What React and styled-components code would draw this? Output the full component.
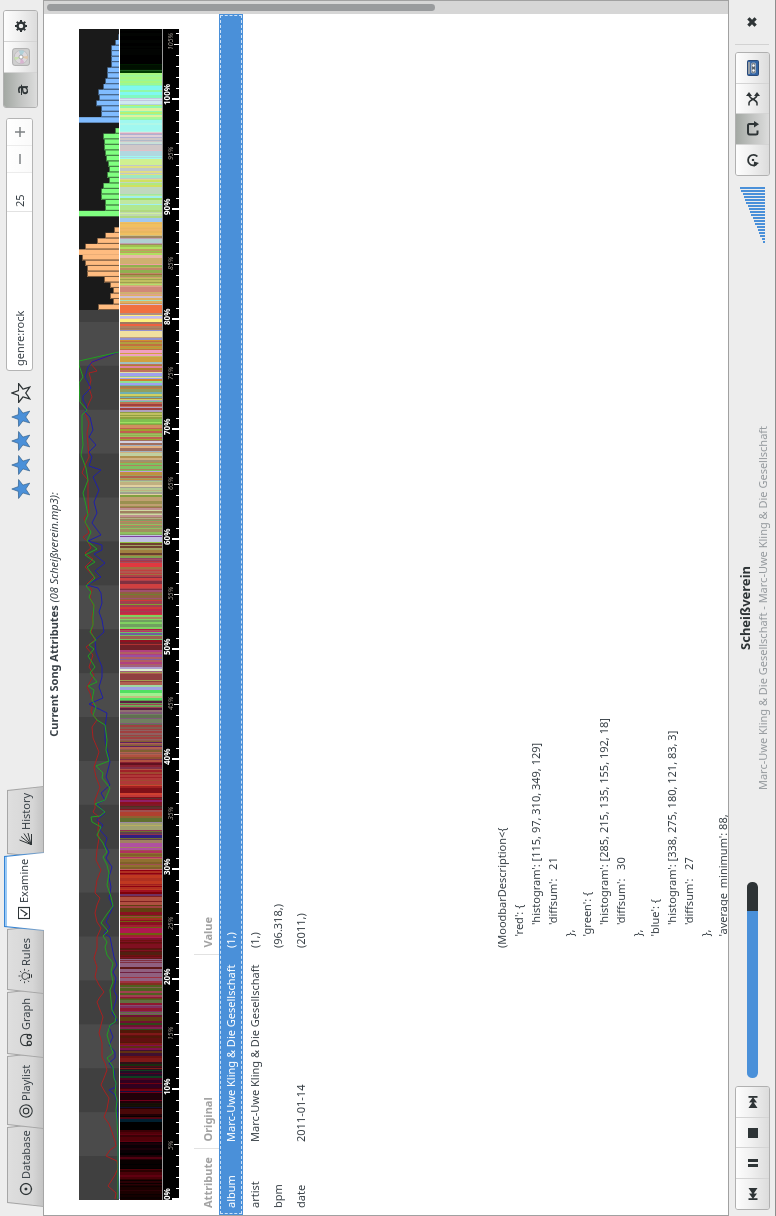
import React from 'react';
import styled, { createGlobalStyle, css } from 'styled-components';

const GlobalStyle = createGlobalStyle`
  *, *::before, *::after { box-sizing: border-box; }
  html, body { margin: 0; height: 100%; overflow: hidden; background: #ededed; }
  button, input { font: inherit; color: inherit; margin: 0; }
`;

const Stage = styled.div`
  position: fixed;
  top: 0;
  left: 0;
  width: 100vh;
  height: 100vw;
  transform-origin: 0 0;
  transform: rotate(-90deg) translateX(-100vh);
  display: flex;
  flex-direction: column;
  overflow: hidden;
  background: #ededed;
  color: #3a4248;
  font: 11px/16px "Noto Sans", "Open Sans", sans-serif;
  border-bottom: 1px solid #8e8e8e;
`;

const TopBar = styled.header`
  display: flex;
  justify-content: space-between;
  height: 44px;
  flex: none;
  border-bottom: 1px solid #a1a1a1;
`;

const Tabs = styled.nav`
  display: flex;
  align-items: flex-end;
  padding-left: 9px;
  margin-bottom: -1px;
`;

const Tab = styled.button`
  position: relative;
  width: ${(p) => p.$width}px;
  height: ${(p) => (p.$active ? 40 : 37)}px;
  padding: 0 0 0 10px;
  margin-right: -6px;
  border: 0;
  background: none;
  display: flex;
  align-items: center;
  gap: 2px;
  z-index: ${(p) => (p.$active ? 2 : 0)};
  isolation: isolate;

  &::before, &::after {
    content: '';
    position: absolute;
    inset: 0;
    z-index: -1;
    clip-path: polygon(4px 0, calc(100% - 4px) 0, 100% 100%, 0 100%);
    background: ${(p) => (p.$active ? 'linear-gradient(#3584d4 30%, #8fa9c4)' : '#a6a6a6')};
  }
  &::after {
    inset: ${(p) => (p.$active ? '1px 1px 0' : '1px')};
    background: ${(p) => (p.$active ? 'linear-gradient(#9ccaf5 2px, #fff 2px)' : 'linear-gradient(#dedede, #d6d6d6 70%, #c4c4c4)')};
  }
  svg { flex: none; }
`;

const Tools = styled.div`
  display: flex;
  align-items: center;
  padding: 0 10px 2px 0;
`;

const Stars = styled.div`
  display: flex;
  gap: 4px;
  margin-right: 12px;
`;

const Query = styled.form`
  display: flex;
  width: 253px;
  height: 27px;
  margin: 0 10px 2px 0;
  border: 1px solid #b4b4b4;
  border-radius: 3px;
  background: #fff;
  overflow: hidden;
`;

const QueryInput = styled.input`
  width: 158px;
  border: 0;
  padding: 0 4px;
  background: none;
  outline: 0;
`;

const CountInput = styled.input`
  width: 39px;
  border: 0;
  border-left: 1px solid #e2e2e2;
  padding: 0 4px;
  background: none;
  outline: 0;
`;

const Step = styled.button`
  flex: 1;
  padding: 0;
  border: 0;
  border-left: 1px solid #ececec;
  background: linear-gradient(#fff, #fafafa);
  display: grid;
  place-items: center;
`;

const Group = styled.div`
  display: flex;
  flex: none;
  width: ${(p) => p.$width || 124}px;
  height: 35px;
  border: 1px solid #b0b0b0;
  border-radius: 3px;
  overflow: hidden;
`;

const ToolButton = styled.button`
  flex: ${(p) => p.$grow || 1} 1 0;
  min-width: 0;
  padding: 0;
  border: 0;
  display: grid;
  place-items: center;
  background: linear-gradient(#fdfdfd, #f2f2f2 40%, #dcdcdc);
  & + & { border-left: 1px solid #d4d4d4; }
  ${(p) => p.$active && css`background: linear-gradient(#a3a8a3, #c2c4c2 50%, #dcdcdc);`}
`;

const Struck = styled.span`
  font-size: 18px;
  font-weight: 500;
  line-height: 18px;
  color: #2e3436;
  text-decoration: line-through;
`;

const Content = styled.div`
  display: flex;
  flex: 1;
  min-height: 0;
  background: #fff;
  border-left: 1px solid #a1a1a1;
`;

const Pane = styled.main`
  flex: 1;
  min-width: 0;
  overflow: hidden;
`;

const ScrollTrack = styled.div`
  width: 14px;
  flex: none;
  padding: 3px 3px 0;
  background: #d6d6d6;
  border-right: 1px solid #a1a1a1;
`;

const ScrollThumb = styled.div`
  width: 7px;
  height: 57%;
  border-radius: 4px;
  background: #999b9d;
`;

const Heading = styled.h1`
  margin: 2px 0 0;
  height: 33px;
  font: bold 11px/16px "Noto Sans", sans-serif;
  text-align: center;
  em { font-weight: 400; }
`;

const Charts = styled.div`
  padding: 0 15px;
`;

const Plot = styled.svg`
  display: block;
  width: 100%;
  height: auto;
`;

const Attributes = styled.table`
  width: 100%;
  margin-top: 15px;
  border-collapse: collapse;
  table-layout: fixed;

  th {
    height: 25px;
    padding: 2px 0 0 7px;
    text-align: left;
    color: #a3a3a3;
    vertical-align: middle;
  }
  th + th {
    border-left: 1px solid #e2e2e2;
  }
  td {
    height: 23px;
    padding: 0 0 0 7px;
    vertical-align: middle;
    white-space: pre;
  }
`;

const Row = styled.tr`
  ${(p) => p.$selected && css`
    background: #4a90d9;
    color: #fff;
    outline: 1px dashed #cfe2f6;
    outline-offset: -2px;
    td { height: 24px; }
  `}
`;

const Description = styled.pre`
  margin: 181px 0 0;
  font: 11px/17px "Noto Sans", sans-serif;
`;

const PlayerBar = styled.footer`
  display: flex;
  align-items: flex-start;
  flex: none;
  height: 47px;
  padding: 6px 0 0 6px;
  border-top: 1px solid #a1a1a1;
`;

const Seek = styled.input`
  appearance: none;
  flex: none;
  width: 196px;
  height: 11px;
  margin: 12px 0 0 8px;
  border-radius: 5px;
  background: linear-gradient(to right, #4a90d9 85%, #2e3436 85%);
  &::-webkit-slider-thumb { appearance: none; width: 0; height: 0; }
`;

const NowPlaying = styled.div`
  flex: 1;
  min-width: 0;
  padding-right: 91px;
  text-align: center;
  white-space: nowrap;
`;

const SongTitle = styled.h2`
  margin: 0;
  font-size: 13px;
  line-height: 20px;
  color: #2e3436;
`;

const SongDetail = styled.p`
  margin: 0;
  line-height: 16px;
  color: #969b9f;
`;

const VolumeMeter = styled.svg`
  flex: none;
  margin: 4px 11px 0 0;
`;

const CloseButton = styled.button`
  width: 45px;
  height: 34px;
  margin-left: 7px;
  padding: 0;
  border: 0;
  border-left: 1px solid #d2d2d2;
  background: none;
  display: grid;
  place-items: center;
`;

const INK = '#2e3436';

function Icon({ size = 16, children }) {
  return (
    <svg width={size} height={size} viewBox="0 0 16 16" fill="none" stroke={INK} strokeWidth="1.3" aria-hidden="true">
      {children}
    </svg>
  );
}

const icons = {
  database: <Icon><circle cx="8" cy="8" r="5.5" /><circle cx="8" cy="8" r="1.4" fill={INK} stroke="none" /></Icon>,
  playlist: <Icon><circle cx="8" cy="8" r="6.2" strokeWidth="1.1" /><circle cx="8" cy="8" r="2.8" strokeWidth="1.1" /></Icon>,
  graph: (
    <Icon>
      <path d="M3.6 12.5C1 8 2 2.5 8 2.5s7 5.500 4.400 10" strokeWidth="1.1" />
      <circle cx="4.600" cy="11.300" r="2.200" strokeWidth="1.1" />
      <circle cx="11.400" cy="11.300" r="2.200" strokeWidth="1.1" />
    </Icon>
  ),
  rules: (
    <Icon>
      <path d="M6 11.500V9.500C3.500 7.500 4.500 4 8 4s4.500 3.500 2 5.500v2zM6.300 13.500h3.400" strokeWidth="1" />
      <path d="M8 .5v1.800M3 2l1.300 1.300M13 2l-1.300 1.300M.8 6.500h1.800M15.200 6.500h-1.800M2 11l1.400-1M14 11l-1.400-1" strokeWidth="0.900" />
    </Icon>
  ),
  examine: <Icon><path d="M2.500 2.500h11v11h-11z" strokeWidth="1.200" /><path d="M5 8.200l2.200 2.800L11.500 4.500" /></Icon>,
  history: <Icon><path d="M3.500 13L8 1.500M3.500 13L11.500 3M3.500 13L14.500 6M3.500 13L15 10M3 13.500h11" strokeWidth="1" /></Icon>,
  gear: (
    <Icon>
      <circle cx="8" cy="8" r="3.400" strokeWidth="2.400" />
      <path d="M8 2v2M8 12v2M2 8h2M12 8h2M3.800 3.800l1.300 1.300M10.900 10.900l1.300 1.300M12.200 3.800l-1.300 1.300M5.100 10.900l-1.300 1.300" strokeWidth="2" />
    </Icon>
  ),
  refresh: (
    <Icon>
      <path d="M3.800 11.800A5.300 5.300 0 1 1 11.500 12.300" strokeWidth="1.700" />
      <path d="M1 8.800l5.500.2-1.500 5z" fill={INK} stroke="none" />
      <circle cx="8" cy="8" r="1.200" fill={INK} stroke="none" />
    </Icon>
  ),
  repeat: (
    <Icon>
      <path d="M6.500 12.500H3.800Q2.500 12.500 2.500 11V4.800Q2.500 3 4.300 3h7.400Q13 3 13 4.800V10" strokeWidth="2" />
      <path d="M9.500 9h6.500l-3.200 5z" fill={INK} stroke="none" />
    </Icon>
  ),
  shuffle: (
    <Icon>
      <path d="M1.500 4h2.500C7.500 4 8 12 12 12M1.500 12h2.500C7.500 12 8 4 12 4" strokeWidth="1.700" />
      <path d="M11 1l4 3-4 3zM11 9l4 3-4 3z" fill={INK} stroke="none" />
    </Icon>
  ),
  close: <Icon><path d="M4.300 4.300l7.400 7.400M11.700 4.300l-7.400 7.400" strokeWidth="3.200" /></Icon>,
  previous: <Icon><path d="M2 3.500h1.800v4L8.500 4v3.300L14 3.500v9L8.500 8.700V12L3.800 8.500v4H2z" fill={INK} stroke="none" /></Icon>,
  next: <Icon><path d="M14 3.500h-1.800v4L7.500 4v3.300L2 3.500v9l5.500-3.800V12l4.700-3.500v4H14z" fill={INK} stroke="none" /></Icon>,
  pause: <Icon><path d="M4 3h3v10H4zM9 3h3v10H9z" fill={INK} stroke="none" /></Icon>,
  stop: <Icon><path d="M3 3h10v10H3z" fill={INK} stroke="none" /></Icon>,
  plus: <Icon><path d="M8 3v10M3 8h10" stroke="#7d8183" strokeWidth="1.500" /></Icon>,
  minus: <Icon><path d="M3 8h10" stroke="#7d8183" strokeWidth="1.500" /></Icon>,
  disc: (
    <Icon size={18}>
      <rect x="0.500" y="0.500" width="15" height="15" rx="2" fill="#cfcfcf" stroke="#a8a8a8" strokeWidth="0.800" />
      <circle cx="8" cy="8" r="6" fill="#dcd8dc" stroke="#b4b4b4" strokeWidth="0.600" />
      <path d="M8 8L5 3A6 6 0 0 1 8 2z" fill="#c8e0b0" stroke="none" />
      <path d="M8 8L13.500 6A6 6 0 0 1 13.200 11z" fill="#b0d0d8" stroke="none" />
      <path d="M8 8L3 11A6 6 0 0 1 2.100 7z" fill="#d8b4d0" stroke="none" />
      <path d="M8 8L9 14A6 6 0 0 1 6 13.600z" fill="#e0c8a8" stroke="none" />
      <circle cx="8" cy="8" r="1.800" fill="#fff" stroke="#999" strokeWidth="0.700" />
    </Icon>
  ),
  cassette: (
    <Icon>
      <rect x="0.500" y="2.500" width="15" height="11" rx="1" fill="#3465a4" stroke="#2b4a78" strokeWidth="1" />
      <rect x="2" y="3" width="12" height="2.200" fill="#98a0a8" stroke="none" />
      <rect x="3" y="6.500" width="10" height="4" rx="1" fill="#5a6470" stroke="#c8ccd0" strokeWidth="0.700" />
      <circle cx="5.500" cy="8.500" r="1.200" fill="#fff" stroke="none" />
      <circle cx="10.500" cy="8.500" r="1.200" fill="#fff" stroke="none" />
    </Icon>
  ),
};

function Star({ filled }) {
  return (
    <svg width="20" height="20" viewBox="0.5 0.2 19 19" aria-hidden="true">
      <path
        d="M10 1l2.300 6.200 6.700.2-5.300 4.100 1.900 6.500L10 14.200 4.400 18l1.900-6.500L1 7.400l6.700-.2z"
        fill={filled ? '#4a90d9' : 'none'}
        stroke={filled ? '#3b6690' : INK}
        strokeWidth={filled ? 0.7 : 1.2}
      />
    </svg>
  );
}

/* Mood strip, from the end of the song to its start: [top, bottom, colours]. */
const SPAN = 1200;
const mood = [
  [29, 64, '000000 000000 020402'], [64, 70, '001800 001000 001c00'], [70, 73, '003c00 206020 80e080'],
  [73, 85, 'a8f880 a0f890 98f898'], [85, 98, '80f8f0 80f8c0 90f8a8'], [98, 105, 'b0d0e0 c0c8e0 d0e8f0'],
  [105, 120, 'a8f898 b8f070 90f8b0 e0f0a0'], [120, 132, 'a0f8f0 b0f8e8'], [132, 138, 'd0a8c0 b0b0d0 e0d0d8'],
  [138, 150, 'd0c8c8 c8e0d8 b0b8c8'], [150, 165, 'd0f090 a0f8f0 b0d8e0 e0c0c8 90f0a0'],
  [165, 180, 'c0c8c8 e0e080 a0e8c0 e0d890'], [180, 195, 'b0e880 d0e060 c0d8c0 a0e8a0'],
  [195, 205, 'a0f0f0 a0e070 c0e8a0'], [205, 218, 'b0e890 c0d8b0 d0f0a0 b0d880'], [218, 222, 'a0c8f0'],
  [222, 235, 'f0c060 e8b860 f0b868'], [235, 245, 'c0a0b0 d0c080 a08860 b0d0d0'], [245, 255, 'b0e060 a0c050 c0c0c0 c0a060'],
  [255, 265, 'e8b8a8 f0a0a0 d0b070'], [265, 275, 'a07040 c0b060 90b050 c08868'], [275, 285, 'c0c060 b0e070 a0a050 d0a070'],
  [285, 295, 'e0a090 d0b070 d08878'], [295, 305, 'e0b060 a0e0c0 d0c0d0 d09850'], [305, 315, 'f07040 90c080 e08040 b09080'],
  [315, 322, 'c0c0f0 fff080 e0c0c0'], [322, 330, 'b08060 f06040 a07860'], [330, 340, 'c0a080 9090d0 f0e0a0 d0d080'],
  [340, 350, 'd09030 b0a040 c07040'], [350, 362, 'f0a0c0 d0e0e0 d0a040 c0c060'], [362, 372, 'c07060 b08030 906040 a0c0c0 e080a0'],
  [372, 385, 'd08030 90c0a0 a0a0f0 90e090 e0e0a0'], [385, 400, 'a08050 90a060 d0d060 70b0b0 c08040'],
  [400, 412, 'b0a0c0 70c0a0 a04040 80b060 c07050'], [412, 425, 'a0e060 80c050 90a040 c0c060'],
  [425, 440, '90b050 c06050 a0c060 a0a030 d09060'], [440, 452, 'a07060 a0b0c0 e0b080 d0d0e0'],
  [452, 463, 'b09050 c0d0a0 a09070 d0b080'], [463, 472, 'b08060 80c060 c0a0e0 a0e080'], [472, 480, 'b06050 c09040 a0a060'],
  [480, 495, 'c0b080 d09080 b0c890 a0a090 e0d0a0'], [495, 508, 'c0a070 a07050 80a040 9a9050'],
  [508, 520, 'd0d8a0 a08060 c09090 b0b080'], [520, 535, '80a060 a09060 b05050 c08060 90c060'],
  [535, 542, '8040a0 a080e0 80e0c0 c0c0e0'], [542, 550, '90c040 704030 a0a060'], [550, 558, 'a08040 80a050 c07060 6a4030'],
  [558, 563, 'b03840 904060 a05060'], [563, 575, 'e03840 c04040 b05850 a07040'], [575, 590, 'c04060 d04040 803040 b04048'],
  [590, 600, '708030 906040 a05070'], [600, 615, 'c0284a d03838 80a030 a04050'], [615, 630, 'b07050 b08060 70a060 b01848 80d060'],
  [630, 640, '7060a0 a06050 70c060 c03070'], [640, 650, '702028 901020 b03030 803050'], [650, 665, 'b04080 8060a0 9850a0 b06060'],
  [665, 672, '90e080 b0a0d0 e0f0d0 a06080'], [672, 685, 'c05048 b06050 904040 a0a050'], [685, 690, 'a0d8a0 a0a0e0'],
  [690, 700, '50e060 a0f090 c0c080 c060a0'], [700, 710, '60a050 80a060 a04050 5a2040'], [710, 725, '708060 907070 805878 607050'],
  [725, 740, '906060 a04040 806050 a02040'], [740, 755, 'a04040 b06050 806030 905850 602060'],
  [755, 770, '803048 b05040 601020 905030 8a2030'], [770, 785, 'a02028 b03838 a04830'], [785, 798, 'c03838 a02020 d04030 801018'],
  [798, 810, '801828 603030 8a1020 503020 902068'], [810, 822, 'b04030 a05050 906030 607030'],
  [822, 830, '9a8aa0 b8b060 a0a070 90d060'], [830, 840, '903050 604050 707030 302080'], [840, 850, 'b06050 b050a0 8aa040 a08060'],
  [850, 870, 'a05050 907030 b03060 80602a c06060'], [870, 890, 'b03020 a02020 c03820 900010'],
  [890, 905, '802020 a01020 703060 b05040 800008'], [905, 925, '706010 a03020 a04040 8a1020 604010'],
  [925, 940, '801030 a02030 706010 b01850'], [940, 958, '701010 601010 502010 801020'], [958, 970, '906080 803040 601818'],
  [970, 985, '702040 a03040 906080 803020'], [985, 1000, '704020 806050 901838 a04050 506020'],
  [1000, 1015, '805070 607040 704020 901830 803060'], [1015, 1030, '304818 603818 701030 802050 604010'],
  [1030, 1045, '601010 801818 501808'], [1045, 1058, '701010 401030 603010 801050'], [1058, 1070, '301018 500818 1a3010 801818'],
  [1070, 1080, '301030 201028 500020 104020'], [1080, 1092, '400008 300020 700010 101040'],
  [1092, 1103, '200008 500010 0a0008 700018'], [1103, 1108, '101005 1a1005 101030'], [1108, 1118, '200005 4a0808 0a0000'],
  [1118, 1122, '400015 500018 002030'], [1122, 1130, '000000'], [1130, 1142, '500008 3a0005 600010'],
  [1142, 1156, '000000 0a0005 1a0008'], [1156, 1160, '200005 500010'], [1160, 1169, '000000 080000'],
  [1169, 1180, '4a0008 2a0000 600010'], [1180, 1195, '1a0000 0a0000 2a0005'], [1195, 1200, '0a0000 140000'],
];

function moodStripes() {
  let seed = 7;
  const next = () => {
    seed = (seed * 1103515245 + 12345) % 2147483648;
    return seed / 2147483648;
  };
  const out = [];
  mood.forEach(([top, bottom, palette]) => {
    const colours = palette.split(' ');
    let y = top;
    while (y < bottom) {
      const w = Math.min(bottom - y, next() < 0.65 ? 1 : 2);
      out.push({ x: SPAN - y - w, w, fill: `#${colours[Math.floor(next() * colours.length)]}` });
      y += w;
    }
  });
  return out;
}

/* Loudness curves as [distance from the end, depth below the top edge] pairs. */
const curves = {
  '#a82020': [
    [1199, 36], [1193, 37], [1186, 29], [1175, 36], [1168, 39], [1161, 38], [1156, 27], [1150, 31], [1146, 37], [1141, 36], [1132, 33], [1124, 30], [1117, 25], [1109, 28], [1098, 30], [1092, 26], [1085, 22], [1078, 25], [1070, 28], [1063, 26], [1057, 23], [1043, 23], [1033, 20], [1025, 22], [1017, 24], [1010, 21], [1002, 18], [997, 21], [992, 25], [985, 20], [977, 16], [967, 18], [958, 15], [948, 18], [937, 18], [928, 22], [922, 18], [913, 16], [905, 18], [898, 21], [893, 16], [880, 18], [870, 22], [860, 17], [850, 18], [838, 20], [830, 19], [817, 20], [812, 14], [808, 16], [800, 16], [787, 21], [777, 17], [767, 15], [752, 20], [738, 14], [727, 13], [720, 18], [712, 12], [703, 14], [693, 11], [687, 8], [675, 15], [667, 10], [655, 14], [647, 7], [640, 16], [632, 12], [625, 14], [617, 13], [607, 15], [597, 11], [590, 13], [584, 8], [577, 15], [567, 6], [559, 14], [553, 6], [548, 12], [542, 9], [537, 4], [533, 10], [518, 5], [512, 10], [500, 9], [480, 9], [473, 3], [463, 7], [457, 10], [445, 9], [433, 8], [423, 10], [413, 6], [403, 10], [397, 13], [388, 10], [380, 12], [373, 10], [371, 18], [363, 11], [352, 40],
  ],
  '#1f1fa8': [
    [1199, 40], [1145, 39], [1103, 38], [1095, 36], [1090, 30], [1087, 37], [1070, 35], [1063, 30], [1058, 36], [1052, 36], [1045, 30], [1037, 34], [1027, 30], [1020, 38], [1013, 33], [997, 38], [990, 35], [978, 37], [972, 34], [965, 38], [957, 35], [947, 33], [937, 31], [933, 25], [927, 31], [922, 27], [907, 34], [898, 30], [887, 32], [877, 30], [867, 33], [858, 27], [852, 30], [845, 26], [838, 28], [830, 21], [825, 24], [820, 18], [813, 26], [804, 18], [800, 26], [793, 22], [785, 31], [777, 27], [762, 31], [740, 26], [727, 26], [713, 28], [704, 10], [698, 24], [687, 20], [677, 23], [667, 23], [652, 17], [640, 16], [632, 25], [620, 23], [612, 20], [603, 23], [593, 22], [588, 19], [585, 8], [577, 22], [571, 16], [563, 26], [554, 15], [550, 23], [545, 23], [541, 9], [535, 22], [523, 13], [513, 18], [502, 15], [490, 20], [477, 14], [470, 22], [466, 10], [457, 13], [452, 10], [445, 17], [437, 10], [430, 14], [417, 11], [412, 6], [407, 8], [400, 4], [396, 4], [388, 12], [377, 6], [367, 9], [362, 13], [352, 40],
  ],
  '#20a020': [
    [1199, 39], [1143, 39], [1120, 38], [1110, 37], [1100, 38], [1093, 36], [1083, 37], [1078, 35], [1067, 34], [1058, 28], [1053, 34], [1045, 31], [1035, 28], [1025, 31], [1022, 36], [1017, 37], [1010, 33], [1000, 32], [990, 31], [982, 34], [972, 32], [963, 34], [955, 28], [947, 26], [942, 28], [936, 24], [931, 29], [923, 22], [914, 28], [906, 34], [897, 32], [885, 28], [873, 30], [865, 28], [857, 24], [852, 28], [843, 24], [835, 18], [827, 22], [822, 13], [817, 12], [816, 21], [812, 26], [804, 16], [800, 26], [788, 31], [778, 23], [773, 24], [766, 17], [761, 30], [750, 27], [740, 28], [725, 26], [720, 18], [715, 14], [707, 17], [700, 13], [690, 15], [686, 9], [682, 18], [673, 11], [667, 16], [656, 9], [649, 15], [645, 10], [640, 17], [632, 11], [625, 14], [617, 14], [605, 15], [597, 10], [592, 12], [586, 7], [578, 16], [567, 8], [562, 16], [555, 6], [549, 18], [541, 8], [532, 12], [522, 6], [515, 9], [505, 7], [493, 4], [480, 9], [468, 7], [455, 2], [445, 4], [430, 3], [415, 3], [410, 8], [402, 1], [383, 0], [377, 4], [365, 0], [361, 0], [352, 40],
  ],
};

const bars = [
  { fill: '#ffbc80', values: [21, 6, 9, 6, 9, 15, 32, 32, 34, 37, 40, 34, 22, 14, 5, 0, 0] },
  { fill: '#80ff80', values: [40, 14, 14, 18, 18, 16, 10, 12, 10, 11, 13, 14, 15, 15, 16, 4, 0] },
  { fill: '#80bcff', values: [40, 18, 18, 23, 20, 21, 16, 14, 12, 12, 8, 8, 8, 8, 4, 1, 0] },
].flatMap(({ fill, values }) => values.map((value) => ({ fill, value })));

function MoodPlot() {
  const step = 281 / bars.length;
  return (
    <Plot viewBox="0 0 1171 100" role="img" aria-label="Moodbar of the current song">
      <rect width="1171" height="40" fill="#404040" />
      {Array.from({ length: 10 }, (_, i) => (
        <rect key={i} x={44 + i * 87.8} width="43.9" height="40" fill="#4b4b4b" />
      ))}
      <rect x="890" width="281" height="40" fill="#1a1a1a" />
      {Object.entries(curves).map(([stroke, points]) => (
        <polyline
          key={stroke}
          points={points.map(([d, h]) => `${SPAN - d},${h}`).join(' ')}
          fill="none"
          stroke={stroke}
          strokeWidth="1"
        />
      ))}
      {bars.map(({ fill, value }, i) => value > 0 && (
        <g key={i}>
          <rect x={890 + i * step} y={40 - value} width={step} height={value} fill={fill} />
          {value < 40 && (
            <path d={`M${890.5 + i * step} 40V${40.5 - value}h${step - 0.5}`} stroke="#000" strokeOpacity="0.5" fill="none" />
          )}
        </g>
      ))}
      <g shapeRendering="crispEdges">
        {moodStripes().map(({ x, w, fill }) => (
          <rect key={x} x={x} y="41" width={w} height="42" fill={fill} />
        ))}
        <rect y="83" width="1171" height="1" fill="#999" />
        <rect y="84" width="1171" height="16" fill="#000" />
        {Array.from({ length: 107 }, (_, i) => {
          const kind = i % 10 === 0 ? 2 : i % 5 === 0 ? 1 : 0;
          const len = [3, 5, 7][kind];
          return <rect key={i} x={i * 11} y={100 - len} width={kind === 2 ? 2 : 1} height={len} fill="#fff" />;
        })}
      </g>
      {Array.from({ length: 22 }, (_, i) => {
        const major = i % 2 === 0;
        return (
          <text
            key={i}
            x={Math.max(0, i * 55 - 5)}
            y={major ? 91 : 94}
            fill={major ? '#fff' : '#a39c94'}
            fontFamily="Noto Sans, sans-serif"
            fontSize={major ? 8 : 7}
            fontWeight={major ? 700 : 400}
            fontStyle={major ? 'normal' : 'italic'}
          >
            {i * 5}%
          </text>
        );
      })}
    </Plot>
  );
}

function Volume() {
  return (
    <VolumeMeter width="56" height="26" viewBox="0 0 56 26" role="img" aria-label="Volume" shapeRendering="crispEdges">
      {Array.from({ length: 19 }, (_, i) => {
        const h = Math.round(2 + i * 1.28);
        return <rect key={i} x={i * 3} y={26 - h} width="2" height={h} fill="#4a90d9" />;
      })}
    </VolumeMeter>
  );
}

const tabs = [
  ['Database', 'database', 84], ['Playlist', 'playlist', 77], ['Graph', 'graph', 70],
  ['Rules', 'rules', 69], ['Examine', 'examine', 79], ['History', 'history', 72],
];

const rows = [
  ['album', 'Marc-Uwe Kling & Die Gesellschaft', '(1,)'],
  ['artist', 'Marc-Uwe Kling & Die Gesellschaft', '(1,)'],
  ['bpm', '', '(96.318,)'],
  ['date', '2011-01-14', '(2011,)'],
];

const description = `(MoodbarDescription<{
    'red': {
        'histogram': [115, 97, 310, 349, 129]
        'diffsum':   21
    },
    'green': {
        'histogram': [285, 215, 135, 155, 192, 18]
        'diffsum':   30
    },
    'blue': {
        'histogram': [338, 275, 180, 121, 83, 3]
        'diffsum':   27
    },
    'average_minimum': 88,`;

export default function App() {
  return (
    <>
      <GlobalStyle />
      <Stage>
        <TopBar>
          <Tabs>
            {tabs.map(([label, icon, width]) => (
              <Tab key={label} type="button" $width={width} $active={label === 'Examine'}>
                {icons[icon]}
                {label}
              </Tab>
            ))}
          </Tabs>
          <Tools>
            <Stars role="img" aria-label="4 of 5 stars">
              {[1, 2, 3, 4, 5].map((n) => <Star key={n} filled={n < 5} />)}
            </Stars>
            <Query>
              <QueryInput aria-label="Search" defaultValue="genre:rock" />
              <CountInput aria-label="Number of songs" defaultValue="25" />
              <Step type="button" aria-label="Less">{icons.minus}</Step>
              <Step type="button" aria-label="More">{icons.plus}</Step>
            </Query>
            <Group $width={98}>
              <ToolButton type="button" aria-label="Match case" $active $grow={1.15}><Struck>a</Struck></ToolButton>
              <ToolButton type="button" aria-label="Albums">{icons.disc}</ToolButton>
              <ToolButton type="button" aria-label="Settings">{icons.gear}</ToolButton>
            </Group>
          </Tools>
        </TopBar>

        <Content>
          <Pane>
            <Heading>Current Song Attributes <em>(08 Scheißverein.mp3):</em></Heading>
            <Charts><MoodPlot /></Charts>
            <Attributes>
              <colgroup>
                <col style={{ width: 66 }} />
                <col style={{ width: 194 }} />
                <col />
              </colgroup>
              <thead>
                <tr><th>Attribute</th><th>Original</th><th>Value</th></tr>
              </thead>
              <tbody>
                {rows.map((cells, i) => (
                  <Row key={cells[0]} $selected={i === 0}>
                    {cells.map((cell, j) => <td key={j}>{cell}</td>)}
                  </Row>
                ))}
                <Row>
                  <td />
                  <td />
                  <td><Description>{description}</Description></td>
                </Row>
              </tbody>
            </Attributes>
          </Pane>
          <ScrollTrack><ScrollThumb /></ScrollTrack>
        </Content>

        <PlayerBar>
          <Group>
            <ToolButton type="button" aria-label="Previous">{icons.previous}</ToolButton>
            <ToolButton type="button" aria-label="Pause">{icons.pause}</ToolButton>
            <ToolButton type="button" aria-label="Stop">{icons.stop}</ToolButton>
            <ToolButton type="button" aria-label="Next">{icons.next}</ToolButton>
          </Group>
          <Seek type="range" aria-label="Position" defaultValue="85" />
          <NowPlaying>
            <SongTitle>Scheißverein</SongTitle>
            <SongDetail>Marc-Uwe Kling &amp; Die Gesellschaft - Marc-Uwe Kling &amp; Die Gesellschaft</SongDetail>
          </NowPlaying>
          <Volume />
          <Group>
            <ToolButton type="button" aria-label="Repeat song">{icons.refresh}</ToolButton>
            <ToolButton type="button" aria-label="Repeat all" $active>{icons.repeat}</ToolButton>
            <ToolButton type="button" aria-label="Shuffle">{icons.shuffle}</ToolButton>
            <ToolButton type="button" aria-label="Consume">{icons.cassette}</ToolButton>
          </Group>
          <CloseButton type="button" aria-label="Close">{icons.close}</CloseButton>
        </PlayerBar>
      </Stage>
    </>
  );
}
